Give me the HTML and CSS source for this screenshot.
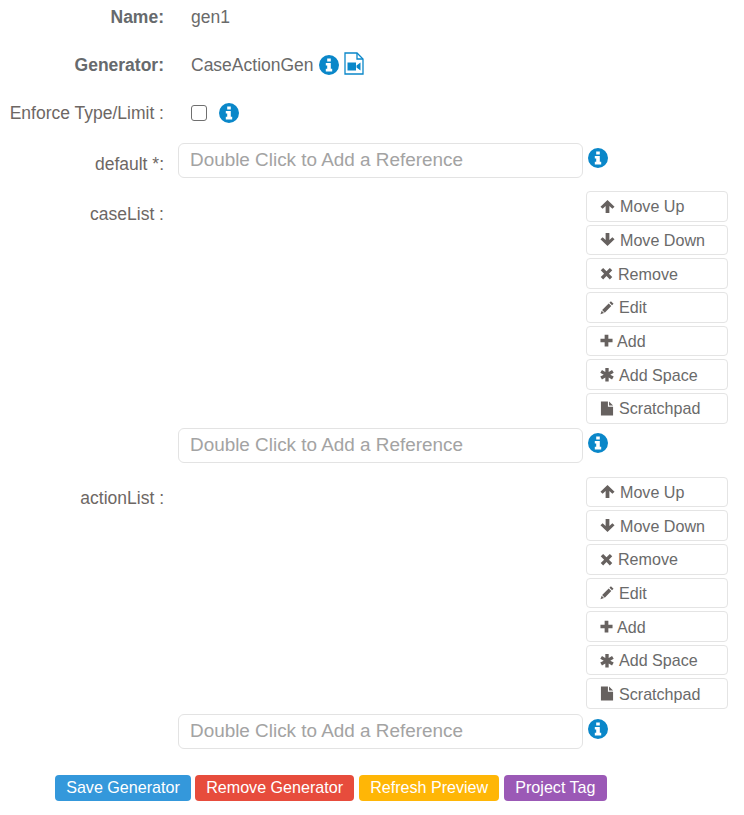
FILE: index.html
```html
<!DOCTYPE html>
<html lang="en">
<head>
<meta charset="utf-8">
<title>Generator</title>
<link rel="stylesheet" href="styles.css">
</head>
<body>
<svg class="defs" width="0" height="0" aria-hidden="true">
  <symbol id="i-info" viewBox="0 0 20 20"><path fill-rule="evenodd" d="M10 0a10 10 0 1 0 0 20a10 10 0 1 0 0-20ZM8.200 3.400h3.600v3H8.200ZM6.800 8h5v5.800h1.400v2.600H6.800v-2.600h1.400v-3.200H6.800Z"/></symbol>
  <symbol id="i-up" viewBox="0 0 16 16"><path d="M8 1 15.500 8.300 13.200 10.500 10 7.400V15H6V7.400L2.800 10.500 .5 8.300Z"/></symbol>
  <symbol id="i-down" viewBox="0 0 16 16"><path d="M8 15 .5 7.700 2.800 5.500 6 8.600V1H10V8.600L13.200 5.500 15.500 7.700Z"/></symbol>
  <symbol id="i-x" viewBox="0 0 14 14"><path d="M3.400 1 7 4.600 10.600 1 13.200 3.600 9.600 7.200 13.200 10.800 10.600 13.400 7 9.800 3.400 13.400 .8 10.800 4.400 7.200 .8 3.600Z"/></symbol>
  <symbol id="i-edit" viewBox="0 0 15 15"><path d="M11.700.8 14.500 3.600 12.900 5.200 10.100 2.400ZM9.300 3.200 12.100 6 5.100 13 2.300 10.200ZM1.800 11 4.300 13.500.5 14.800Z"/></symbol>
  <symbol id="i-plus" viewBox="0 0 14 14"><path d="M5 .8h4v4.400h4.500v3.800H9v4.400H5V9H.5V5.200H5Z"/></symbol>
  <symbol id="i-star" viewBox="0 0 15 15"><path d="M5.700.5h3.600v4.200l3.600-2.100 1.800 3.100L11 7.700l3.700 2-1.800 3.100-3.600-2.100v4.200H5.700v-4.200l-3.600 2.100-1.800-3.100 3.700-2-3.700-2 1.800-3.100 3.600 2.100Z"/></symbol>
  <symbol id="i-file" viewBox="0 0 15 16"><path d="M1 .5h7.500v5.500H14v9.500H1ZM9.700.5 14 4.800H9.700Z"/></symbol>
</svg>

<main class="form">
  <div class="row row-text">
    <div class="label strong">Name:</div>
    <div class="value">gen1</div>
  </div>
  <div class="row row-text">
    <div class="label strong">Generator:</div>
    <div class="value">CaseActionGen
      <svg class="info"><use href="#i-info"/></svg>
      <svg class="video" viewBox="0 0 20 23"><path class="video-line" d="M1 1h12l6 6v15H1Z"/><path class="video-line" d="M13 1v6h6"/><path class="video-fill" d="M3.500 10.500h8.500v8H3.500ZM12.500 13.500l4-3v8l-4-3Z"/></svg>
    </div>
  </div>
  <div class="row row-text">
    <div class="label">Enforce Type/Limit :</div>
    <div class="value">
      <span class="checkbox"></span>
      <svg class="info"><use href="#i-info"/></svg>
    </div>
  </div>

  <div class="row row-input">
    <div class="label">default *:</div>
    <div class="ref">
      <div class="ref-input">Double Click to Add a Reference</div>
      <svg class="info"><use href="#i-info"/></svg>
    </div>
  </div>

  <div class="row row-list">
    <div class="label list-label first-list">caseList :</div>
    <div class="list-body">
      <div class="actions">
        <button class="action"><svg class="glyph g-15"><use href="#i-up"/></svg>Move Up</button>
        <button class="action"><svg class="glyph g-15"><use href="#i-down"/></svg>Move Down</button>
        <button class="action"><svg class="glyph g-13"><use href="#i-x"/></svg>Remove</button>
        <button class="action"><svg class="glyph g-14"><use href="#i-edit"/></svg>Edit</button>
        <button class="action"><svg class="glyph g-plus"><use href="#i-plus"/></svg>Add</button>
        <button class="action"><svg class="glyph g-14"><use href="#i-star"/></svg>Add Space</button>
        <button class="action"><svg class="glyph g-14"><use href="#i-file"/></svg>Scratchpad</button>
      </div>
      <div class="ref">
        <div class="ref-input">Double Click to Add a Reference</div>
        <svg class="info"><use href="#i-info"/></svg>
      </div>
    </div>
  </div>

  <div class="row row-list">
    <div class="label list-label">actionList :</div>
    <div class="list-body">
      <div class="actions">
        <button class="action"><svg class="glyph g-15"><use href="#i-up"/></svg>Move Up</button>
        <button class="action"><svg class="glyph g-15"><use href="#i-down"/></svg>Move Down</button>
        <button class="action"><svg class="glyph g-13"><use href="#i-x"/></svg>Remove</button>
        <button class="action"><svg class="glyph g-14"><use href="#i-edit"/></svg>Edit</button>
        <button class="action"><svg class="glyph g-plus"><use href="#i-plus"/></svg>Add</button>
        <button class="action"><svg class="glyph g-14"><use href="#i-star"/></svg>Add Space</button>
        <button class="action"><svg class="glyph g-14"><use href="#i-file"/></svg>Scratchpad</button>
      </div>
      <div class="ref">
        <div class="ref-input">Double Click to Add a Reference</div>
        <svg class="info"><use href="#i-info"/></svg>
      </div>
    </div>
  </div>

  <div class="footer">
    <button class="cmd blue">Save Generator</button>
    <button class="cmd red">Remove Generator</button>
    <button class="cmd amber">Refresh Preview</button>
    <button class="cmd purple">Project Tag</button>
  </div>
</main>
</body>
</html>
```

FILE: styles.css
```css
* { box-sizing: border-box; }

html, body {
  margin: 0;
  padding: 0;
  background: #fff;
}

body {
  font-family: "Liberation Sans", Arial, sans-serif;
  font-size: 17.5px;
  color: #6a6a6a;
}

.defs { position: absolute; }

.form {
  width: 744px;
  height: 815px;
  overflow: hidden;
}

.row {
  display: grid;
  grid-template-columns: 164px 1fr;
  column-gap: 14px;
}

.row-text {
  height: 34px;
  margin-bottom: 14px;
  align-items: center;
}

.row-text .label { padding-top: 1px; }

.row-text .value {
  padding-left: 13px;
  display: flex;
  align-items: center;
  gap: 5px;
}

.row-input {
  margin-top: -1px;
  margin-bottom: 12.6px;
}

.row-input .label { padding-top: 11px; }

.label {
  text-align: right;
  color: #6d6764;
}

.strong {
  font-weight: 700;
  color: #666a6d;
}

.list-label { padding-top: 11px; }
.first-list { padding-top: 13px; }

.row-list { margin-bottom: 13.2px; }

.list-body {
  display: flex;
  flex-direction: column;
}

.actions {
  display: flex;
  flex-direction: column;
  gap: 3px;
  margin-left: 408px;
  width: 142px;
}

.action {
  display: flex;
  align-items: center;
  gap: 5px;
  height: 30.67px;
  padding: 1px 13px 0;
  font: inherit;
  font-size: 16.1px;
  color: #6a6a6a;
  background: #fff;
  border: 1px solid #e4e4e4;
  border-radius: 4px;
  text-align: left;
}

.glyph {
  fill: #66615f;
  flex: none;
  margin-top: -1px;
}

.g-15 { width: 15px; height: 15px; }
.g-14 { width: 14px; height: 15px; }
.g-13 { width: 13px; height: 13px; }
.g-plus { width: 13px; height: 13px; margin-right: -1px; }

.ref {
  display: flex;
  align-items: flex-start;
  gap: 5px;
}

.list-body .ref { margin-top: 4.4px; }

.ref-input {
  width: 405px;
  height: 35.4px;
  padding: 0 11px;
  border: 1px solid #e3e3e3;
  border-radius: 6px;
  font-size: 18.9px;
  line-height: 31px;
  color: #a3a3a3;
  background: #fff;
}

.ref .info { margin-top: 5px; }

.info {
  width: 20px;
  height: 20px;
  fill: #0a87c9;
  flex: none;
}

.video {
  width: 20px;
  height: 23px;
  flex: none;
  margin-top: -4px;
}

.video-line {
  fill: none;
  stroke: #0a87c9;
  stroke-width: 1.300;
}

.video-fill { fill: #0a87c9; }

.checkbox {
  display: block;
  width: 16px;
  height: 16px;
  border: 1px solid #6f6f6f;
  border-radius: 3px;
  background: #fff;
  margin-right: 7px;
}

.footer {
  display: flex;
  gap: 4px;
  margin-top: 25.6px;
  padding-left: 55px;
}

.cmd {
  height: 26px;
  padding: 0 11.2px;
  border: 0;
  border-radius: 4px;
  font: inherit;
  font-size: 16.1px;
  color: #fff;
}

.blue { background: #3498db; }
.red { background: #e74c3c; }
.amber { background: #ffb606; margin-left: 0.7px; }
.purple { background: #9b59b6; margin-left: 0.7px; }
```
